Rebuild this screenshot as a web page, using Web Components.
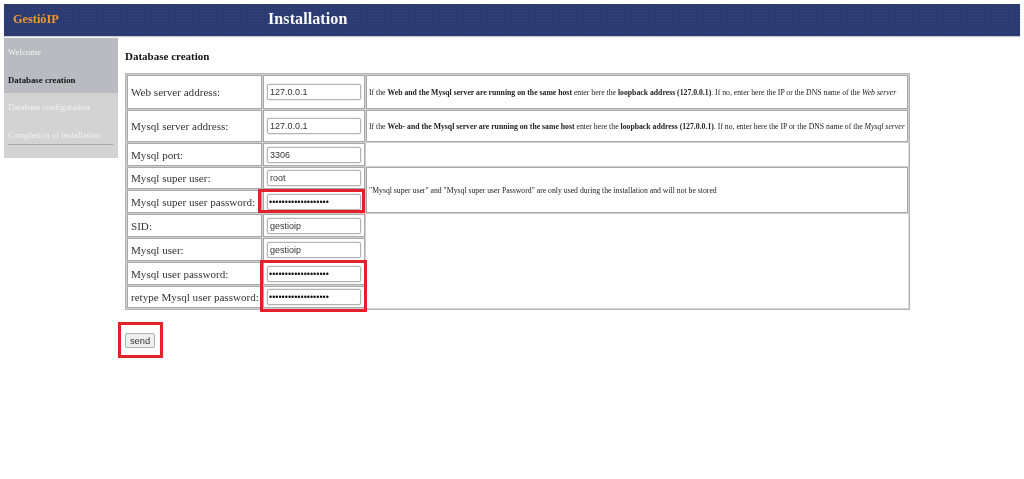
<!DOCTYPE html>
<html lang="en">
<head>
<meta charset="utf-8">
<title>GestióIP Installation</title>
<style>
  html, body { margin: 0; background: #fff; }
  body { font-family: "Liberation Serif", serif; color: #222; }
  .page { width: 1024px; height: 479px; overflow: hidden; box-sizing: border-box; padding: 4px 4px 0; filter: blur(0.4px); }
  .cols { display: flex; gap: 7px; margin-top: 2px; }
</style>
</head>
<body>
<div class="page">
  <gip-header brand="GestióIP" title="Installation"></gip-header>
  <div class="cols">
    <gip-sidebar>
      <gip-nav-item state="done">Welcome</gip-nav-item>
      <gip-nav-item state="current">Database creation</gip-nav-item>
      <gip-nav-item>Database configuration</gip-nav-item>
      <gip-nav-item last>Completion of installation</gip-nav-item>
    </gip-sidebar>
    <gip-db-form></gip-db-form>
  </div>
</div>

<script>
const headerTpl = document.createElement('template')
headerTpl.innerHTML = `
  <style>
    :host {
      display: flex; align-items: center; height: 32px; box-sizing: border-box; padding-bottom: 2px;
      background-color: #2b3a71;
      background-image: radial-gradient(#34457f 0.7px, transparent 0.8px);
      background-size: 3px 3px;
      box-shadow: 0 1px 1px #c8c8c8;
    }
    .brand { width: 264px; box-sizing: border-box; padding-left: 9px; color: #f0982c; font-weight: 700; font-size: 12.3px; }
    .title { color: #fafbfd; font-weight: 700; font-size: 16px; letter-spacing: 0.1px; }
  </style>
  <div class="brand"></div>
  <div class="title"></div>
`

class GipHeader extends HTMLElement {
  constructor() {
    super()
    this.attachShadow({mode: 'open'}).appendChild(headerTpl.content.cloneNode(true))
  }
  connectedCallback() {
    this.shadowRoot.querySelector('.brand').textContent = this.getAttribute('brand')
    this.shadowRoot.querySelector('.title').textContent = this.getAttribute('title')
  }
}
customElements.define('gip-header', GipHeader)

const sidebarTpl = document.createElement('template')
sidebarTpl.innerHTML = `
  <style>
    :host { display: flex; flex-direction: column; width: 114px; height: 120px; background: #d3d3d3; flex: none; }
  </style>
  <slot></slot>
`

class GipSidebar extends HTMLElement {
  constructor() {
    super()
    this.attachShadow({mode: 'open'}).appendChild(sidebarTpl.content.cloneNode(true))
  }
}
customElements.define('gip-sidebar', GipSidebar)

const navTpl = document.createElement('template')
navTpl.innerHTML = `
  <style>
    :host {
      display: block; box-sizing: border-box; height: 27.5px; padding: 8px 4px 0 4px;
      font-size: 8.8px; line-height: 13px; color: #f2f2f2; white-space: nowrap;
    }
    :host([state="done"]), :host([state="current"]) { background: #b9bbc0; }
    :host([state="current"]) { color: #141418; font-weight: 700; }
    :host([last]) { height: 37px; }
    :host([last]) .rule { display: block; }
    .rule { display: none; height: 1px; background: #a9a9a9; margin: 2px 1px 0 0; }
  </style>
  <slot></slot>
  <div class="rule"></div>
`

class GipNavItem extends HTMLElement {
  constructor() {
    super()
    this.attachShadow({mode: 'open'}).appendChild(navTpl.content.cloneNode(true))
  }
}
customElements.define('gip-nav-item', GipNavItem)

const inputTpl = document.createElement('template')
inputTpl.innerHTML = `
  <style>
    :host { display: block; }
    input {
      display: block; width: 94px; height: 16px; box-sizing: border-box; margin: 0; padding: 0 2px;
      border: 1px solid #b4b4b4; border-radius: 2px; background: #fff; color: #333;
      box-shadow: 0 0 0 0.5px #dcdcdc;
      font: 9px "Liberation Sans", Arial, sans-serif; outline: none;
    }
    input[type=password] { color: #111; font-size: 9px; padding: 0 1px; }
  </style>
  <input>
`

class GipInput extends HTMLElement {
  constructor() {
    super()
    this.attachShadow({mode: 'open'}).appendChild(inputTpl.content.cloneNode(true))
  }
  connectedCallback() {
    const input = this.shadowRoot.querySelector('input')
    input.type = this.getAttribute('type') || 'text'
    input.setAttribute('value', this.getAttribute('value') || '')
  }
}
customElements.define('gip-input', GipInput)

const HINT_WEB = `If the <b>Web and the Mysql server are running on the same host</b> enter here the <b>loopback address (127.0.0.1)</b>. If no, enter here the IP or the DNS name of the <i>Web server</i>`
const HINT_DB = `If the <b>Web- and the Mysql server are running on the same host</b> enter here the <b>loopback address (127.0.0.1)</b>. If no, enter here the IP or the DNS name of the <i>Mysql server</i>`
const HINT_SUPER = `"Mysql super user" and "Mysql super user Password" are only used during the installation and will not be stored`
const SECRET = '•'.repeat(19)

const ROWS = [
  {label: 'Web server address:', value: '127.0.0.1', h: 34, hint: HINT_WEB},
  {label: 'Mysql server address:', value: '127.0.0.1', h: 32, hint: HINT_DB},
  {label: 'Mysql port:', value: '3306', h: 23},
  {label: 'Mysql super user:', value: 'root', h: 22, hint: HINT_SUPER, span: 2},
  {label: 'Mysql super user password:', value: SECRET, h: 23, type: 'password'},
  {label: 'SID:', value: 'gestioip', h: 23},
  {label: 'Mysql user:', value: 'gestioip', h: 23},
  {label: 'Mysql user password:', value: SECRET, h: 23, type: 'password'},
  {label: 'retype Mysql user password:', value: SECRET, h: 22, type: 'password'},
]

const formTpl = document.createElement('template')
formTpl.innerHTML = `
  <style>
    :host { display: block; position: relative; width: 785px; }
    h3 { margin: 0; height: 35px; padding-top: 12px; box-sizing: border-box; font-size: 11px; line-height: 13px; color: #111; }
    table {
      table-layout: fixed; width: 785px; border-collapse: separate; border-spacing: 1px;
      border: 1px solid #b4b4b4; box-shadow: inset 0 0 0 1px #d6d6d6; box-sizing: border-box; margin: 0;
    }
    td { padding: 0; box-sizing: border-box; vertical-align: middle; }
    td.bordered { border: 1px solid #a8a8a8; box-shadow: 0 0 0 1px #d0d0d0; }
    .label { padding-left: 3px; font-size: 11.1px; color: #333; white-space: nowrap; }
    .field gip-input { margin-left: 3px; }
    .hint { padding: 0 2px; font-size: 7.74px; color: #222; white-space: nowrap; }
    .actions { margin-top: 23px; }
    button {
      display: block; width: 30px; height: 15px; padding: 0; margin: 0; box-sizing: border-box;
      border: 1px solid #b0b0b0; border-radius: 2px; background: #efefef; color: #333;
      font: 9.3px "Liberation Sans", Arial, sans-serif;
    }
    .mark { position: absolute; border: 3px solid #e4202a; box-sizing: border-box; pointer-events: none; }
  </style>
  <h3>Database creation</h3>
  <table>
    <colgroup><col style="width:135px"><col style="width:102px"><col></colgroup>
    <tbody></tbody>
  </table>
  <div class="actions"><button type="button">send</button></div>
  <div class="mark" style="left:133px;top:151px;width:107px;height:24px"></div>
  <div class="mark" style="left:135px;top:222px;width:107px;height:52px"></div>
  <div class="mark" style="left:-7px;top:284px;width:45px;height:36px"></div>
`

class GipDbForm extends HTMLElement {
  constructor() {
    super()
    this.attachShadow({mode: 'open'}).appendChild(formTpl.content.cloneNode(true))
  }
  connectedCallback() {
    const body = this.shadowRoot.querySelector('tbody')
    ROWS.forEach(r => {
      const tr = document.createElement('tr')
      tr.style.height = r.h + 'px'
      const label = document.createElement('td')
      label.className = 'bordered label'
      label.textContent = r.label
      const field = document.createElement('td')
      field.className = 'bordered field'
      const input = document.createElement('gip-input')
      input.setAttribute('value', r.value)
      if (r.type) input.setAttribute('type', r.type)
      field.appendChild(input)
      tr.append(label, field)
      if (r.hint) {
        const hint = document.createElement('td')
        hint.className = 'bordered hint'
        if (r.span) hint.rowSpan = r.span
        hint.innerHTML = r.hint
        tr.appendChild(hint)
      }
      body.appendChild(tr)
    })
  }
}
customElements.define('gip-db-form', GipDbForm)
</script>
</body>
</html>
